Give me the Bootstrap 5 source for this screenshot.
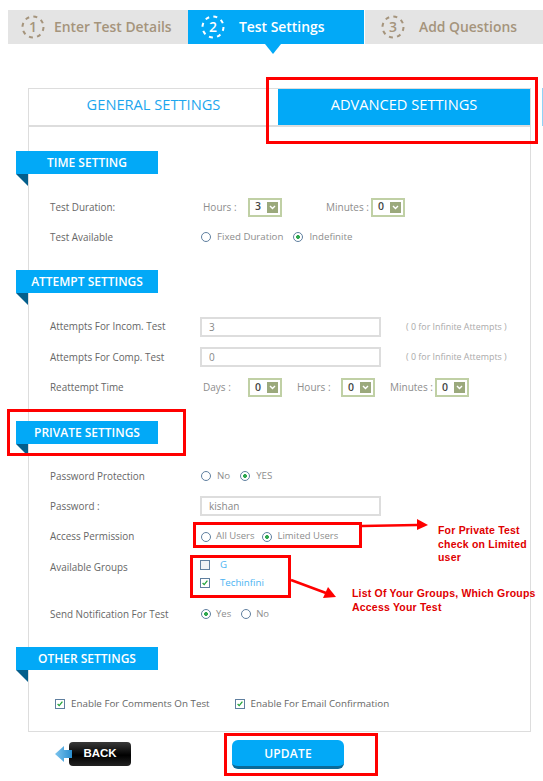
<!DOCTYPE html>
<html lang="en">
<head>
<meta charset="utf-8">
<title>Test Settings</title>
<link href="https://cdn.jsdelivr.net/npm/bootstrap@5.3.0/dist/css/bootstrap.min.css" rel="stylesheet">
<style>
html,body{margin:0;background:#fff}
body{width:543px;height:781px;overflow:hidden;position:relative;font-family:"Open Sans","Liberation Sans",sans-serif;font-size:10px;color:#666}
.stepper{margin:10px 0 0 8px;height:34px}
.stepitem{background:#e4e4e4;color:#a5947c;font-size:13.9px;font-weight:600;height:34px;position:relative;padding-left:12px}
.stepitem svg{flex:none}
.s1{width:180px;gap:8px}
.s2{width:176px;background:#02a9f7;color:#fff;gap:13px}
.s3{width:178px;gap:13px;padding-left:15px;margin-left:1px}
.s2::after{content:"";position:absolute;left:77px;top:34px;border:8.5px solid transparent;border-top:10px solid #02a9f7;border-bottom:0}
.panelbox{margin:44px 0 0 28px;width:503px;border:1.5px solid #ddd;padding-bottom:12px}
.tabsrow{height:36px;border-bottom:2px solid #ddd;box-sizing:content-box}
.tabgen{width:249px;color:#1ca6ee;font-size:14.65px;padding-bottom:4px}
.tabadv{width:252px;background:#02a9f7;color:#fff;font-size:14.65px;padding-bottom:4px}
.ribbon{margin:24px 0 0 -13px;width:142px;height:23px;background:#02a9f7;color:#fff;font-size:12px;font-weight:600;position:relative}
.ribbon::after{content:"";position:absolute;left:0;top:23px;border-top:12px solid #045f8c;border-left:12px solid transparent}
.ribbon.tight{margin-top:18px}
.rowsbox{padding:18px 0 0 21px}
.rowsbox.p17{padding-top:17px}
.rowsbox.pchk{padding:19px 0 0 26px}
.setrow{height:30px;font-size:9.9px}
.setrow.r31{height:31px}
.lbl{width:150px;flex:none;color:#666}
.mut{color:#8d8d8d;font-size:10px}
.ddbox{width:34px;height:19px;border:2px solid #c0d0a5;background:#fff;padding:0 2px 0 5px;color:#444;font-size:10.5px;font-weight:600}
.ddarrow{width:11px;height:11px;background:#9ba97c}
.wd44{width:44px;flex:none}
.wd45{width:45px;flex:none}
.ddl1{margin-left:3px;width:45px;flex:none}
.ml45{margin-left:44px}
.ml15{margin-left:15px}
.txtin{width:181px;height:20px;border:2px solid #ddd;border-radius:0;padding:0 7px;font-size:10px;color:#888;font-family:inherit;box-shadow:none}
.hint{margin-left:25px;font-size:8.9px;color:#aaa}
.form-check-input.rad{width:10px;height:10px;margin:0 0 0 1px;border:1.5px solid #5f7f9f;background:#fff;flex:none}
.form-check-input.rad:checked{background:radial-gradient(circle,#2fa84f 0 1.7px,#fff 2.2px);border-color:#5f7f9f}
.form-check-input.rad.g8{margin-left:8px}
.form-check-input.rad.g9{margin-left:9px}
.form-check-input.rad.g10{margin-left:10px}
.form-check-input.chk{width:10px;height:10px;margin:0;border:1.5px solid #5f7f9f;border-radius:0;background:#eef1f4;flex:none}
.form-check-input.chk:checked{background:#fff url("data:image/svg+xml,%3Csvg xmlns='http://www.w3.org/2000/svg' viewBox='0 0 10 10'%3E%3Cpath d='M2 5l2 2 4-5' fill='none' stroke='%2322a33a' stroke-width='1.6'/%3E%3C/svg%3E") center/100% no-repeat;border-color:#5f7f9f}
.rt{color:#8d8d8d;margin-left:6px;font-size:9.7px}
.rt.nar{margin-left:5px;font-size:9.5px}
.grpbox{height:47px;align-items:flex-start}
.lbltop{margin-top:8px}
.grplist{margin-top:4px}
.grpitem{height:18px}
.grpname{color:#4ab3f2;margin-left:10px;font-size:9.7px}
.chkrow{height:30px;color:#666;font-size:9.8px}
.chktxt{margin-left:6px}
.form-check-input.chk.g25{margin-left:25px}
.foot{margin-top:8px;padding-left:55px}
.backbtn{width:76px;height:24px;margin-top:2px;position:relative;padding-left:14px}
.backbtn span{display:flex;width:62px;height:24px;border-radius:4px;background:linear-gradient(#3a3a3a,#000 55%,#222);color:#fff;font-family:"Liberation Sans",sans-serif;font-size:11.5px;font-weight:700;align-items:center;justify-content:center}
.backicon{position:absolute;left:0;top:3px}
.updbtn{width:112px;height:29px;margin-left:101px;background:#02a9f7;border:0;border-bottom:3px solid #0a6a99;border-radius:6px;color:#fff;font-size:12px;font-weight:600;padding:1px 0 0;letter-spacing:.2px}
.redbox{position:absolute;border:3px solid #f00;pointer-events:none}
.rb1{left:266px;top:77px;width:272px;height:67px}
.rb2{left:7px;top:409px;width:179px;height:47px}
.rb3{left:193px;top:522px;width:169px;height:26px}
.rb4{left:190px;top:555px;width:101px;height:43px}
.rb5{left:224px;top:733px;width:154px;height:43px}
.redtxt{position:absolute;color:#e00000;font-family:"Liberation Sans",sans-serif;font-size:10.5px;font-weight:700;line-height:13.5px;letter-spacing:.2px;white-space:nowrap}
.rt1{left:438px;top:524px}
.rt2{left:352px;top:587px}
.overlay{position:absolute;left:0;top:0;pointer-events:none}
.sliver{position:absolute;left:542px;top:88px;width:1px;height:38px;background:#8fd3f7}
</style>
</head>
<body>
<div class="stepper d-flex">
  <div class="stepitem s1 d-flex align-items-center">
    <svg width="26" height="26" viewBox="0 0 26 26"><circle cx="13" cy="13" r="10.5" fill="none" stroke="#a5947c" stroke-width="2" stroke-dasharray="4 4.25"/><text x="13" y="18" text-anchor="middle" font-size="14" font-weight="600" fill="#a5947c" font-family="Open Sans">1</text></svg>
    <span>Enter Test Details</span>
  </div>
  <div class="stepitem s2 d-flex align-items-center">
    <svg width="26" height="26" viewBox="0 0 26 26"><circle cx="13" cy="13" r="10.5" fill="none" stroke="#fff" stroke-width="2" stroke-dasharray="4 4.25"/><text x="13" y="18" text-anchor="middle" font-size="14" font-weight="600" fill="#fff" font-family="Open Sans">2</text></svg>
    <span>Test Settings</span>
  </div>
  <div class="stepitem s3 d-flex align-items-center">
    <svg width="26" height="26" viewBox="0 0 26 26"><circle cx="13" cy="13" r="10.5" fill="none" stroke="#a5947c" stroke-width="2" stroke-dasharray="4 4.25"/><text x="13" y="18" text-anchor="middle" font-size="14" font-weight="600" fill="#a5947c" font-family="Open Sans">3</text></svg>
    <span>Add Questions</span>
  </div>
</div>

<div class="panelbox">
  <div class="tabsrow d-flex">
    <div class="tabgen d-flex align-items-center justify-content-center">GENERAL SETTINGS</div>
    <div class="tabadv d-flex align-items-center justify-content-center">ADVANCED SETTINGS</div>
  </div>

  <div class="ribbon d-flex align-items-center justify-content-center">TIME SETTING</div>
  <div class="rowsbox">
    <div class="setrow d-flex align-items-center">
      <div class="lbl">Test Duration:</div>
      <span class="mut ddl1">Hours :</span>
      <span class="ddbox d-flex align-items-center justify-content-between">3<span class="ddarrow d-flex align-items-center justify-content-center"><svg width="7" height="5" viewBox="0 0 7 5"><path d="M1 1l2.5 2.5L6 1" fill="none" stroke="#fff" stroke-width="1.4"/></svg></span></span>
      <span class="mut ml45 wd45">Minutes :</span>
      <span class="ddbox d-flex align-items-center justify-content-between">0<span class="ddarrow d-flex align-items-center justify-content-center"><svg width="7" height="5" viewBox="0 0 7 5"><path d="M1 1l2.5 2.5L6 1" fill="none" stroke="#fff" stroke-width="1.4"/></svg></span></span>
    </div>
    <div class="setrow d-flex align-items-center">
      <div class="lbl">Test Available</div>
      <input class="form-check-input rad" type="radio" name="a">
      <span class="rt">Fixed Duration</span>
      <input class="form-check-input rad g10" type="radio" name="a" checked>
      <span class="rt">Indefinite</span>
    </div>
  </div>

  <div class="ribbon tight d-flex align-items-center justify-content-center">ATTEMPT SETTINGS</div>
  <div class="rowsbox">
    <div class="setrow r31 d-flex align-items-center">
      <div class="lbl">Attempts For Incom. Test</div>
      <input class="form-control txtin" type="text" value="3">
      <span class="hint">( 0 for Infinite Attempts )</span>
    </div>
    <div class="setrow d-flex align-items-center">
      <div class="lbl">Attempts For Comp. Test</div>
      <input class="form-control txtin" type="text" value="0">
      <span class="hint">( 0 for Infinite Attempts )</span>
    </div>
    <div class="setrow r31 d-flex align-items-center">
      <div class="lbl">Reattempt Time</div>
      <span class="mut ddl1">Days :</span>
      <span class="ddbox d-flex align-items-center justify-content-between">0<span class="ddarrow d-flex align-items-center justify-content-center"><svg width="7" height="5" viewBox="0 0 7 5"><path d="M1 1l2.5 2.5L6 1" fill="none" stroke="#fff" stroke-width="1.4"/></svg></span></span>
      <span class="mut ml15 wd44">Hours :</span>
      <span class="ddbox d-flex align-items-center justify-content-between">0<span class="ddarrow d-flex align-items-center justify-content-center"><svg width="7" height="5" viewBox="0 0 7 5"><path d="M1 1l2.5 2.5L6 1" fill="none" stroke="#fff" stroke-width="1.4"/></svg></span></span>
      <span class="mut ml15 wd45">Minutes :</span>
      <span class="ddbox d-flex align-items-center justify-content-between">0<span class="ddarrow d-flex align-items-center justify-content-center"><svg width="7" height="5" viewBox="0 0 7 5"><path d="M1 1l2.5 2.5L6 1" fill="none" stroke="#fff" stroke-width="1.4"/></svg></span></span>
    </div>
  </div>

  <div class="ribbon tight d-flex align-items-center justify-content-center">PRIVATE SETTINGS</div>
  <div class="rowsbox p17">
    <div class="setrow d-flex align-items-center">
      <div class="lbl">Password Protection</div>
      <input class="form-check-input rad" type="radio" name="b">
      <span class="rt">No</span>
      <input class="form-check-input rad g10" type="radio" name="b" checked>
      <span class="rt">YES</span>
    </div>
    <div class="setrow d-flex align-items-center">
      <div class="lbl">Password :</div>
      <input class="form-control txtin" type="text" value="kishan">
    </div>
    <div class="setrow r31 d-flex align-items-center">
      <div class="lbl">Access Permission</div>
      <input class="form-check-input rad" type="radio" name="c">
      <span class="rt nar">All Users</span>
      <input class="form-check-input rad g8" type="radio" name="c" checked>
      <span class="rt nar">Limited Users</span>
    </div>
    <div class="setrow grpbox d-flex">
      <div class="lbl lbltop">Available Groups</div>
      <div class="grplist d-flex flex-column">
        <div class="grpitem d-flex align-items-center"><input class="form-check-input chk" type="checkbox"><span class="grpname">G</span></div>
        <div class="grpitem d-flex align-items-center"><input class="form-check-input chk" type="checkbox" checked><span class="grpname">Techinfini</span></div>
      </div>
    </div>
    <div class="setrow d-flex align-items-center">
      <div class="lbl">Send Notification For Test</div>
      <input class="form-check-input rad" type="radio" name="d" checked>
      <span class="rt nar">Yes</span>
      <input class="form-check-input rad g10" type="radio" name="d">
      <span class="rt nar">No</span>
    </div>
  </div>

  <div class="ribbon tight d-flex align-items-center justify-content-center">OTHER SETTINGS</div>
  <div class="rowsbox pchk">
    <div class="chkrow d-flex align-items-center">
      <input class="form-check-input chk" type="checkbox" checked>
      <span class="chktxt">Enable For Comments On Test</span>
      <input class="form-check-input chk g25" type="checkbox" checked>
      <span class="chktxt">Enable For Email Confirmation</span>
    </div>
  </div>
</div>

<div class="foot d-flex align-items-start">
  <a class="backbtn d-block text-decoration-none" href="#">
    <svg class="backicon" width="18" height="18" viewBox="0 0 18 18"><defs><linearGradient id="bk" x1="0" x2="1"><stop offset="0" stop-color="#7cc4ee"/><stop offset="1" stop-color="#2a8fd0"/></linearGradient></defs><path d="M0 9 9 1v4h8v8H9v4z" fill="url(#bk)"/></svg>
    <span>BACK</span>
  </a>
  <button class="updbtn btn" type="button">UPDATE</button>
</div>

<div class="sliver"></div>
<div class="redbox rb1"></div>
<div class="redbox rb2"></div>
<div class="redbox rb3"></div>
<div class="redbox rb4"></div>
<div class="redbox rb5"></div>
<svg class="overlay" width="543" height="781" viewBox="0 0 543 781">
  <path d="M362 526 417 525" stroke="#f00" stroke-width="2.5" fill="none"/>
  <path d="M417 519 428 525 417 530z" fill="#f00"/>
  <path d="M291 580 326 593" stroke="#f00" stroke-width="2.5" fill="none"/>
  <path d="M328 587 336 597 323 598z" fill="#f00"/>
</svg>
<div class="redtxt rt1">For Private Test<br>check on Limited<br>user</div>
<div class="redtxt rt2">List Of Your Groups, Which Groups<br>Access Your Test</div>

<script src="https://cdn.jsdelivr.net/npm/bootstrap@5.3.0/dist/js/bootstrap.bundle.min.js"></script>
</body>
</html>
